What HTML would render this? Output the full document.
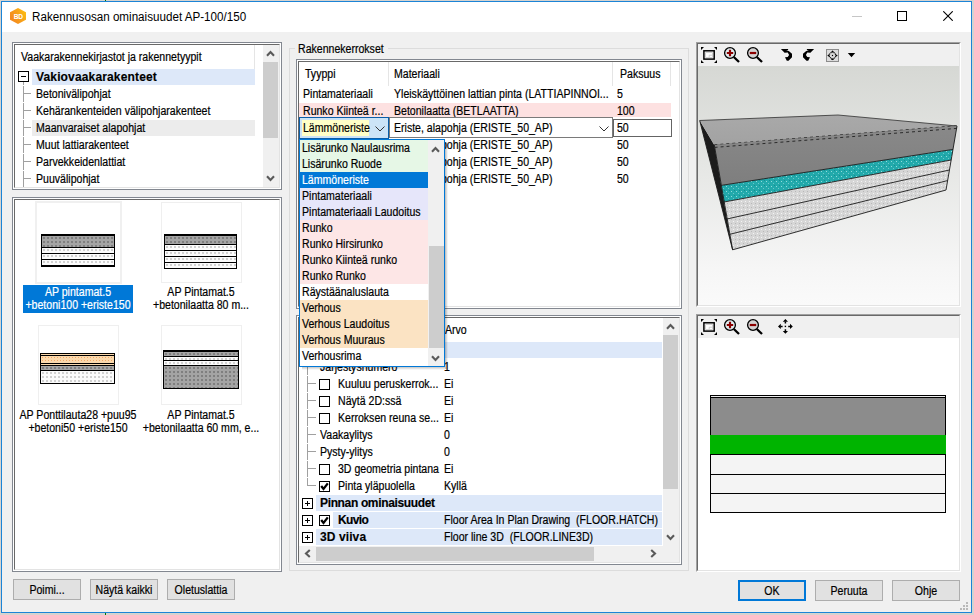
<!DOCTYPE html><html><head><meta charset="utf-8"><style>
*{margin:0;padding:0}
html,body{width:974px;height:615px;overflow:hidden;background:#d6d3cf}
body div{position:absolute}
svg{display:block}
.t{font-family:"Liberation Sans",sans-serif;font-size:12px;line-height:16px;white-space:nowrap;color:#000;transform:scaleX(0.88);transform-origin:0 0;-webkit-text-stroke:0.2px currentColor}
.tb{font-family:"Liberation Sans",sans-serif;font-size:12px;font-weight:bold;line-height:16px;letter-spacing:-0.1px;white-space:nowrap;color:#000;-webkit-text-stroke:0.15px currentColor}
.tt{font-family:"Liberation Sans",sans-serif;font-size:12px;line-height:22px;white-space:nowrap;color:#000;transform:scaleX(0.97);transform-origin:0 0}
.tc{font-family:"Liberation Sans",sans-serif;font-size:12px;line-height:13px;white-space:nowrap;text-align:center;color:#000;transform:scaleX(0.88);transform-origin:50% 0;-webkit-text-stroke:0.2px currentColor}
</style></head><body><div style="left:0;top:0;width:974px;height:615px;background:#d6d3cf"></div>
<div style="left:105px;top:0px;width:1px;height:1px;background:#007a00"></div>
<div style="left:105px;top:613px;width:1px;height:2px;background:#007a00"></div>
<div style="left:1px;top:1px;width:971px;height:612px;background:#f0f0f0;border:1px solid #1c84d6;box-sizing:border-box"></div>
<div style="left:2px;top:2px;width:969px;height:30px;background:#fff"></div>
<div style="left:9px;top:7px;width:18px;height:18px"><svg width="18" height="18" viewBox="0 0 18 18"><defs><linearGradient id="hx" x1="0" y1="0.8" x2="1" y2="0.2"><stop offset="0" stop-color="#f3841f"/><stop offset="0.55" stop-color="#f7a01a"/><stop offset="1" stop-color="#fdc010"/></linearGradient></defs><path d="M9 0.9 L17 5.3 L17 12.7 L9 17.1 L1 12.7 L1 5.3 Z" fill="url(#hx)"/><text x="9.2" y="12" font-family="Liberation Sans" font-weight="bold" font-size="6.6" fill="#fff" text-anchor="middle" letter-spacing="-0.3">BD</text></svg></div>
<div class="tt" style="left:32px;top:6px">Rakennusosan ominaisuudet AP-100/150</div>
<div style="left:852px;top:16px;width:10px;height:1px;background:#c6c6c6"></div>
<div style="left:897px;top:11px;width:10px;height:10px;border:1px solid #000;box-sizing:border-box"></div>
<div style="left:943px;top:11px;width:10px;height:10px"><svg width="10" height="10" viewBox="0 0 10 10"><path d="M0.3 0.3 L9.7 9.7 M9.7 0.3 L0.3 9.7" stroke="#000" stroke-width="1.1"/></svg></div>
<div style="left:12px;top:42px;width:270px;height:148px;border:1px solid #828790;background:#fff;box-sizing:border-box"></div>
<div style="left:14px;top:44px;width:266px;height:144px;border-top:1px solid #696969;border-left:1px solid #696969;border-right:1px solid #e3e3e3;border-bottom:1px solid #e3e3e3;background:#fff;box-sizing:border-box"></div>
<div style="left:254px;top:45px;width:1px;height:24px;background:#e5e5e5"></div>
<div class="t" style="left:21px;top:49px;">Vaakarakennekirjastot ja rakennetyypit</div>
<div style="left:32px;top:69px;width:223px;height:16px;background:#dde8f9"></div>
<div style="left:18px;top:71px;width:11px;height:11px;border:1px solid #000;background:#fff;box-sizing:border-box"></div>
<div style="left:21px;top:76px;width:5px;height:1px;background:#000"></div>
<div class="tb" style="left:36px;top:69px;letter-spacing:0.15px">Vakiovaakarakenteet</div>
<div style="left:32px;top:120px;width:223px;height:16px;background:#ececec"></div>
<div style="left:23px;top:82px;width:1px;height:105px;background:repeating-linear-gradient(#a0a0a0 0 3px,transparent 3px 4px,#a0a0a0 4px 17px)"></div>
<div style="left:24px;top:93px;width:7px;height:1px;background:#a0a0a0"></div>
<div class="t" style="left:36px;top:86px;">Betonivälipohjat</div>
<div style="left:24px;top:110px;width:7px;height:1px;background:#a0a0a0"></div>
<div class="t" style="left:36px;top:103px;">Kehärankenteiden välipohjarakenteet</div>
<div style="left:24px;top:127px;width:7px;height:1px;background:#a0a0a0"></div>
<div class="t" style="left:36px;top:120px;">Maanvaraiset alapohjat</div>
<div style="left:24px;top:144px;width:7px;height:1px;background:#a0a0a0"></div>
<div class="t" style="left:36px;top:137px;">Muut lattiarakenteet</div>
<div style="left:24px;top:161px;width:7px;height:1px;background:#a0a0a0"></div>
<div class="t" style="left:36px;top:154px;">Parvekkeidenlattiat</div>
<div style="left:24px;top:178px;width:7px;height:1px;background:#a0a0a0"></div>
<div class="t" style="left:36px;top:171px;">Puuvälipohjat</div>
<div style="left:263px;top:45px;width:16px;height:142px;background:#f0f0f0"></div>
<div style="left:263px;top:62px;width:15px;height:76px;background:#cdcdcd"></div>
<div style="left:266px;top:50px;width:9px;height:7px"><svg width="9" height="7" viewBox="0 0 9 7"><path d="M1 5.8 L4.5 2 L8 5.8" fill="none" stroke="#5a5a5a" stroke-width="2.1"/></svg></div>
<div style="left:266px;top:175px;width:9px;height:7px"><svg width="9" height="7" viewBox="0 0 9 7"><path d="M1 1.2 L4.5 5 L8 1.2" fill="none" stroke="#5a5a5a" stroke-width="2.1"/></svg></div>
<div style="left:12px;top:197px;width:270px;height:375px;border:1px solid #828790;background:#fff;box-sizing:border-box"></div>
<div style="left:14px;top:199px;width:266px;height:371px;border-top:1px solid #696969;border-left:1px solid #696969;border-right:1px solid #e3e3e3;border-bottom:1px solid #e3e3e3;background:#fff;box-sizing:border-box"></div>
<div style="left:35px;top:201px;width:87px;height:83px;border:2px solid #f0f0f0;box-sizing:border-box"></div>
<div style="left:41px;top:234px;width:74px;height:33px;background:#000"></div>
<div style="left:42px;top:236px;width:72px;height:11px;background-color:#a4a4a4;background-image:radial-gradient(circle,#6a6a6a 0.6px,transparent 0.9px);background-size:4px 4px"></div>
<div style="left:42px;top:248px;width:72px;height:5px;background-color:#fbfbfb;background-image:radial-gradient(circle,#b8b8b8 0.6px,transparent 0.9px);background-size:4px 4px"></div>
<div style="left:42px;top:254px;width:72px;height:5px;background-color:#fbfbfb;background-image:radial-gradient(circle,#b8b8b8 0.6px,transparent 0.9px);background-size:4px 4px"></div>
<div style="left:42px;top:260px;width:72px;height:5px;background-color:#fbfbfb;background-image:radial-gradient(circle,#b8b8b8 0.6px,transparent 0.9px);background-size:4px 4px"></div>
<div style="left:23px;top:285px;width:110px;height:28px;background:#0078d7"></div>
<div class="tc" style="left:-72px;top:286px;width:300px;color:#fff">AP pintamat.5<br>+betoni100 +eriste150</div>
<div style="left:161px;top:202px;width:81px;height:81px;border:1px solid #efefef;box-sizing:border-box"></div>
<div style="left:164px;top:234px;width:73px;height:35px;background:#000"></div>
<div style="left:165px;top:236px;width:71px;height:8px;background-color:#a4a4a4;background-image:radial-gradient(circle,#6a6a6a 0.6px,transparent 0.9px);background-size:4px 4px"></div>
<div style="left:165px;top:245px;width:71px;height:5px;background-color:#fbfbfb;background-image:radial-gradient(circle,#b8b8b8 0.6px,transparent 0.9px);background-size:4px 4px"></div>
<div style="left:165px;top:251px;width:71px;height:5px;background-color:#fbfbfb;background-image:radial-gradient(circle,#b8b8b8 0.6px,transparent 0.9px);background-size:4px 4px"></div>
<div style="left:165px;top:257px;width:71px;height:5px;background-color:#fbfbfb;background-image:radial-gradient(circle,#b8b8b8 0.6px,transparent 0.9px);background-size:4px 4px"></div>
<div style="left:165px;top:263px;width:71px;height:5px;background-color:#fbfbfb;background-image:radial-gradient(circle,#b8b8b8 0.6px,transparent 0.9px);background-size:4px 4px"></div>
<div class="tc" style="left:51px;top:286px;width:300px;">AP Pintamat.5<br>+betonilaatta 80 m...</div>
<div style="left:38px;top:325px;width:81px;height:80px;border:1px solid #efefef;box-sizing:border-box"></div>
<div style="left:40px;top:353px;width:75px;height:31px;background:#000"></div>
<div style="left:41px;top:354px;width:73px;height:1px;background-color:#fbd9ac;background-image:radial-gradient(circle,#f2a868 0.7px,transparent 1px);background-size:3px 3px"></div>
<div style="left:41px;top:356px;width:73px;height:7px;background-color:#fbd9ac;background-image:radial-gradient(circle,#f2a868 0.7px,transparent 1px);background-size:3px 3px"></div>
<div style="left:41px;top:364px;width:73px;height:1px;background-color:#fbd9ac;background-image:radial-gradient(circle,#f2a868 0.7px,transparent 1px);background-size:3px 3px"></div>
<div style="left:41px;top:366px;width:73px;height:4px;background-color:#a4a4a4;background-image:radial-gradient(circle,#6a6a6a 0.6px,transparent 0.9px);background-size:4px 4px"></div>
<div style="left:41px;top:371px;width:73px;height:12px;background-color:#fbfbfb;background-image:radial-gradient(circle,#b8b8b8 0.6px,transparent 0.9px);background-size:4px 4px"></div>
<div class="tc" style="left:-72px;top:409px;width:300px;">AP Ponttilauta28 +puu95<br>+betoni50 +eriste150</div>
<div style="left:161px;top:325px;width:81px;height:80px;border:1px solid #efefef;box-sizing:border-box"></div>
<div style="left:163px;top:350px;width:76px;height:39px;background:#000"></div>
<div style="left:164px;top:352px;width:74px;height:4px;background-color:#a4a4a4;background-image:radial-gradient(circle,#6a6a6a 0.6px,transparent 0.9px);background-size:4px 4px"></div>
<div style="left:164px;top:357px;width:74px;height:3px;background-color:#fbfbfb;background-image:radial-gradient(circle,#b8b8b8 0.6px,transparent 0.9px);background-size:4px 4px"></div>
<div style="left:164px;top:361px;width:74px;height:4px;background-color:#fbfbfb;background-image:radial-gradient(circle,#b8b8b8 0.6px,transparent 0.9px);background-size:4px 4px"></div>
<div style="left:164px;top:366px;width:74px;height:22px;background-color:#a4a4a4;background-image:radial-gradient(circle,#6a6a6a 0.6px,transparent 0.9px);background-size:4px 4px"></div>
<div class="tc" style="left:51px;top:409px;width:300px;">AP Pintamat.5<br>+betonilaatta 60 mm, e...</div>
<div style="left:13px;top:579px;width:68px;height:21px;border:1px solid #adadad;background:#e1e1e1;box-sizing:border-box"></div>
<div class="tc" style="left:-103.0px;top:584px;width:300px;">Poimi...</div>
<div style="left:90px;top:579px;width:68px;height:21px;border:1px solid #adadad;background:#e1e1e1;box-sizing:border-box"></div>
<div class="tc" style="left:-26.0px;top:584px;width:300px;">Näytä kaikki</div>
<div style="left:167px;top:579px;width:68px;height:21px;border:1px solid #adadad;background:#e1e1e1;box-sizing:border-box"></div>
<div class="tc" style="left:51.0px;top:584px;width:300px;">Oletuslattia</div>
<div style="left:738px;top:580px;width:68px;height:21px;border:2px solid #0078d7;background:#e1e1e1;box-sizing:border-box"></div>
<div class="tc" style="left:622.0px;top:585px;width:300px;">OK</div>
<div style="left:815px;top:580px;width:68px;height:21px;border:1px solid #adadad;background:#e1e1e1;box-sizing:border-box"></div>
<div class="tc" style="left:699.0px;top:585px;width:300px;">Peruuta</div>
<div style="left:892px;top:580px;width:68px;height:21px;border:1px solid #adadad;background:#e1e1e1;box-sizing:border-box"></div>
<div class="tc" style="left:776.0px;top:585px;width:300px;">Ohje</div>
<div style="left:289px;top:48px;width:400px;height:523px;border:1px solid #dcdcdc;box-sizing:border-box"></div>
<div style="left:295px;top:40px;width:93px;height:16px;background:#f0f0f0"></div>
<div class="t" style="left:298px;top:41px;">Rakennekerrokset</div>
<div style="left:296px;top:59px;width:386px;height:250px;border:1px solid #828790;background:#fff;box-sizing:border-box"></div>
<div style="left:298px;top:61px;width:382px;height:246px;border-top:1px solid #696969;border-left:1px solid #696969;border-right:1px solid #e3e3e3;border-bottom:1px solid #e3e3e3;background:#fff;box-sizing:border-box"></div>
<div style="left:388px;top:62px;width:1px;height:24px;background:#e5e5e5"></div>
<div style="left:612px;top:62px;width:1px;height:24px;background:#e5e5e5"></div>
<div style="left:670px;top:62px;width:1px;height:24px;background:#e5e5e5"></div>
<div class="t" style="left:305px;top:66px;">Tyyppi</div>
<div class="t" style="left:394px;top:66px;">Materiaali</div>
<div class="t" style="left:620px;top:66px;">Paksuus</div>
<div class="t" style="left:303px;top:86px;">Pintamateriaali</div>
<div class="t" style="left:394px;top:86px;">Yleiskäyttöinen lattian pinta (LATTIAPINNOI...</div>
<div class="t" style="left:617px;top:86px;">5</div>
<div style="left:299px;top:103px;width:372px;height:14px;background:#fde1e1"></div>
<div class="t" style="left:303px;top:103px;">Runko Kiinteä r...</div>
<div class="t" style="left:394px;top:103px;">Betonilaatta (BETLAATTA)</div>
<div class="t" style="left:617px;top:103px;">100</div>
<div style="left:299px;top:117px;width:90px;height:22px;border:1px solid #0b5ea8;background:#cce4f7;box-sizing:border-box"></div>
<div style="left:302px;top:120px;width:67px;height:16px;background:#ffffc8"></div>
<div class="t" style="left:303px;top:120px;">Lämmöneriste</div>
<div style="left:375px;top:126px;width:10px;height:6px"><svg width="10" height="6" viewBox="0 0 10 6"><path d="M0.5 0.5 L5 5 L9.5 0.5" fill="none" stroke="#333" stroke-width="1"/></svg></div>
<div style="left:389px;top:117px;width:224px;height:21px;border:1px solid #7a7a7a;background:#fff;box-sizing:border-box"></div>
<div class="t" style="left:394px;top:120px;">Eriste, alapohja (ERISTE_50_AP)</div>
<div style="left:599px;top:126px;width:10px;height:6px"><svg width="10" height="6" viewBox="0 0 10 6"><path d="M0.5 0.5 L5 5 L9.5 0.5" fill="none" stroke="#333" stroke-width="1"/></svg></div>
<div style="left:613px;top:119px;width:59px;height:18px;border:1px solid #646464;background:#fff;box-sizing:border-box"></div>
<div class="t" style="left:617px;top:120px;">50</div>
<div class="t" style="left:394px;top:137px;">Eriste, alapohja (ERISTE_50_AP)</div>
<div class="t" style="left:617px;top:137px;">50</div>
<div class="t" style="left:394px;top:154px;">Eriste, alapohja (ERISTE_50_AP)</div>
<div class="t" style="left:617px;top:154px;">50</div>
<div class="t" style="left:394px;top:171px;">Eriste, alapohja (ERISTE_50_AP)</div>
<div class="t" style="left:617px;top:171px;">50</div>
<div style="left:296px;top:315px;width:386px;height:250px;border:1px solid #828790;background:#fff;box-sizing:border-box"></div>
<div style="left:298px;top:317px;width:382px;height:246px;border-top:1px solid #696969;border-left:1px solid #696969;border-right:1px solid #e3e3e3;border-bottom:1px solid #e3e3e3;background:#fff;box-sizing:border-box"></div>
<div class="t" style="left:445px;top:322px;">Arvo</div>
<div style="left:299px;top:342px;width:363px;height:16px;background:#dde8f9"></div>
<div style="left:307px;top:358px;width:1px;height:128px;background:repeating-linear-gradient(#a0a0a0 0 16px,transparent 16px 17px);background-position:0 1px"></div>
<div style="left:308px;top:366px;width:8px;height:1px;background:#a0a0a0"></div>
<div class="t" style="left:320px;top:359px;">Järjestysnumero</div>
<div class="t" style="left:444px;top:359px;">1</div>
<div style="left:308px;top:383px;width:8px;height:1px;background:#a0a0a0"></div>
<div style="left:319px;top:379px;width:11px;height:11px;border:1px solid #000;background:#fff;box-sizing:border-box"></div>
<div class="t" style="left:338px;top:376px;">Kuuluu peruskerrok...</div>
<div class="t" style="left:444px;top:376px;">Ei</div>
<div style="left:308px;top:400px;width:8px;height:1px;background:#a0a0a0"></div>
<div style="left:319px;top:396px;width:11px;height:11px;border:1px solid #000;background:#fff;box-sizing:border-box"></div>
<div class="t" style="left:338px;top:393px;">Näytä 2D:ssä</div>
<div class="t" style="left:444px;top:393px;">Ei</div>
<div style="left:308px;top:417px;width:8px;height:1px;background:#a0a0a0"></div>
<div style="left:319px;top:413px;width:11px;height:11px;border:1px solid #000;background:#fff;box-sizing:border-box"></div>
<div class="t" style="left:338px;top:410px;">Kerroksen reuna se...</div>
<div class="t" style="left:444px;top:410px;">Ei</div>
<div style="left:308px;top:434px;width:8px;height:1px;background:#a0a0a0"></div>
<div class="t" style="left:320px;top:427px;">Vaakaylitys</div>
<div class="t" style="left:444px;top:427px;">0</div>
<div style="left:308px;top:451px;width:8px;height:1px;background:#a0a0a0"></div>
<div class="t" style="left:320px;top:444px;">Pysty-ylitys</div>
<div class="t" style="left:444px;top:444px;">0</div>
<div style="left:308px;top:468px;width:8px;height:1px;background:#a0a0a0"></div>
<div style="left:319px;top:464px;width:11px;height:11px;border:1px solid #000;background:#fff;box-sizing:border-box"></div>
<div class="t" style="left:338px;top:461px;">3D geometria pintana</div>
<div class="t" style="left:444px;top:461px;">Ei</div>
<div style="left:308px;top:485px;width:8px;height:1px;background:#a0a0a0"></div>
<div style="left:319px;top:481px;width:11px;height:11px;border:1px solid #000;background:#fff;box-sizing:border-box"></div>
<div style="left:319px;top:481px;width:11px;height:11px"><svg width="11" height="11" viewBox="0 0 11 11"><path d="M2.2 5 L4.5 7.9 L8.8 2.4" fill="none" stroke="#000" stroke-width="2.3"/></svg></div>
<div class="t" style="left:338px;top:478px;">Pinta yläpuolella</div>
<div class="t" style="left:444px;top:478px;">Kyllä</div>
<div style="left:316px;top:495px;width:346px;height:16px;background:#dde8f9"></div>
<div style="left:302px;top:498px;width:11px;height:11px;border:1px solid #000;background:#fff;box-sizing:border-box"></div>
<div style="left:305px;top:503px;width:5px;height:1px;background:#000"></div>
<div style="left:307px;top:501px;width:1px;height:5px;background:#000"></div>
<div class="tb" style="left:320px;top:495px;letter-spacing:-0.35px">Pinnan ominaisuudet</div>
<div style="left:333px;top:512px;width:329px;height:16px;background:#dde8f9"></div>
<div style="left:302px;top:515px;width:11px;height:11px;border:1px solid #000;background:#fff;box-sizing:border-box"></div>
<div style="left:305px;top:520px;width:5px;height:1px;background:#000"></div>
<div style="left:307px;top:518px;width:1px;height:5px;background:#000"></div>
<div style="left:319px;top:515px;width:11px;height:11px;border:1px solid #000;background:#fff;box-sizing:border-box"></div>
<div style="left:319px;top:515px;width:11px;height:11px"><svg width="11" height="11" viewBox="0 0 11 11"><path d="M2.2 5 L4.5 7.9 L8.8 2.4" fill="none" stroke="#000" stroke-width="2.3"/></svg></div>
<div class="tb" style="left:338px;top:512px;letter-spacing:-0.6px">Kuvio</div>
<div class="t" style="left:444px;top:512px;">Floor Area In Plan Drawing&nbsp; (FLOOR.HATCH)</div>
<div style="left:316px;top:529px;width:346px;height:16px;background:#dde8f9"></div>
<div style="left:302px;top:532px;width:11px;height:11px;border:1px solid #000;background:#fff;box-sizing:border-box"></div>
<div style="left:305px;top:537px;width:5px;height:1px;background:#000"></div>
<div style="left:307px;top:535px;width:1px;height:5px;background:#000"></div>
<div class="tb" style="left:320px;top:529px;letter-spacing:0.1px">3D viiva</div>
<div class="t" style="left:444px;top:529px;">Floor line 3D&nbsp; (FLOOR.LINE3D)</div>
<div style="left:663px;top:318px;width:16px;height:228px;background:#f0f0f0"></div>
<div style="left:663px;top:335px;width:15px;height:154px;background:#cdcdcd"></div>
<div style="left:666px;top:323px;width:9px;height:7px"><svg width="9" height="7" viewBox="0 0 9 7"><path d="M1 5.8 L4.5 2 L8 5.8" fill="none" stroke="#5a5a5a" stroke-width="2.1"/></svg></div>
<div style="left:666px;top:534px;width:9px;height:7px"><svg width="9" height="7" viewBox="0 0 9 7"><path d="M1 1.2 L4.5 5 L8 1.2" fill="none" stroke="#5a5a5a" stroke-width="2.1"/></svg></div>
<div style="left:299px;top:546px;width:380px;height:16px;background:#f0f0f0"></div>
<div style="left:316px;top:547px;width:278px;height:14px;background:#cdcdcd"></div>
<div style="left:304px;top:549px;width:7px;height:9px"><svg width="7" height="9" viewBox="0 0 7 9"><path d="M5.8 1 L2 4.5 L5.8 8" fill="none" stroke="#5a5a5a" stroke-width="2.1"/></svg></div>
<div style="left:650px;top:549px;width:7px;height:9px"><svg width="7" height="9" viewBox="0 0 7 9"><path d="M1.2 1 L5 4.5 L1.2 8" fill="none" stroke="#5a5a5a" stroke-width="2.1"/></svg></div>
<div style="left:445px;top:142px;width:3px;height:227px;background:linear-gradient(90deg,rgba(0,0,0,.28),rgba(0,0,0,0))"></div>
<div style="left:302px;top:367px;width:143px;height:3px;background:linear-gradient(rgba(0,0,0,.22),rgba(0,0,0,0))"></div>
<div style="left:299px;top:139px;width:146px;height:228px;border:1px solid #0078d7;background:#fff;box-sizing:border-box"></div>
<div style="left:300px;top:140px;width:128px;height:16px;background:#e6f7e6"></div>
<div class="t" style="left:302px;top:140px;color:#000">Lisärunko Naulausrima</div>
<div style="left:300px;top:156px;width:128px;height:16px;background:#e6f7e6"></div>
<div class="t" style="left:302px;top:156px;color:#000">Lisärunko Ruode</div>
<div style="left:300px;top:172px;width:128px;height:16px;background:#0078d7"></div>
<div class="t" style="left:302px;top:172px;color:#fff">Lämmöneriste</div>
<div style="left:300px;top:188px;width:128px;height:16px;background:#e6e6fa"></div>
<div class="t" style="left:302px;top:188px;color:#000">Pintamateriaali</div>
<div style="left:300px;top:204px;width:128px;height:16px;background:#e6e6fa"></div>
<div class="t" style="left:302px;top:204px;color:#000">Pintamateriaali Laudoitus</div>
<div style="left:300px;top:220px;width:128px;height:16px;background:#fde6e6"></div>
<div class="t" style="left:302px;top:220px;color:#000">Runko</div>
<div style="left:300px;top:236px;width:128px;height:16px;background:#fde6e6"></div>
<div class="t" style="left:302px;top:236px;color:#000">Runko Hirsirunko</div>
<div style="left:300px;top:252px;width:128px;height:16px;background:#fde6e6"></div>
<div class="t" style="left:302px;top:252px;color:#000">Runko Kiinteä runko</div>
<div style="left:300px;top:268px;width:128px;height:16px;background:#fde6e6"></div>
<div class="t" style="left:302px;top:268px;color:#000">Runko Runko</div>
<div style="left:300px;top:284px;width:128px;height:16px;background:#fff"></div>
<div class="t" style="left:302px;top:284px;color:#000">Räystäänaluslauta</div>
<div style="left:300px;top:300px;width:128px;height:16px;background:#fbe3c3"></div>
<div class="t" style="left:302px;top:300px;color:#000">Verhous</div>
<div style="left:300px;top:316px;width:128px;height:16px;background:#fbe3c3"></div>
<div class="t" style="left:302px;top:316px;color:#000">Verhous Laudoitus</div>
<div style="left:300px;top:332px;width:128px;height:16px;background:#fbe3c3"></div>
<div class="t" style="left:302px;top:332px;color:#000">Verhous Muuraus</div>
<div style="left:300px;top:348px;width:128px;height:16px;background:#fff"></div>
<div class="t" style="left:302px;top:348px;color:#000">Verhousrima</div>
<div style="left:428px;top:140px;width:16px;height:226px;background:#f0f0f0"></div>
<div style="left:429px;top:246px;width:15px;height:102px;background:#cdcdcd"></div>
<div style="left:431px;top:146px;width:9px;height:7px"><svg width="9" height="7" viewBox="0 0 9 7"><path d="M1 5.8 L4.5 2 L8 5.8" fill="none" stroke="#5a5a5a" stroke-width="2.1"/></svg></div>
<div style="left:431px;top:355px;width:9px;height:7px"><svg width="9" height="7" viewBox="0 0 9 7"><path d="M1 1.2 L4.5 5 L8 1.2" fill="none" stroke="#5a5a5a" stroke-width="2.1"/></svg></div>
<div style="left:696px;top:42px;width:265px;height:265px;border-top:1px solid #a0a0a0;border-left:1px solid #a0a0a0;border-right:1px solid #fff;border-bottom:1px solid #fff;box-sizing:border-box"></div>
<div style="left:697px;top:43px;width:263px;height:263px;border-top:1px solid #696969;border-left:1px solid #696969;border-right:1px solid #e3e3e3;border-bottom:1px solid #e3e3e3;background:#f0f0f0;box-sizing:border-box"></div>
<div style="left:698px;top:66px;width:261px;height:239px;background:linear-gradient(#d6d8d4,#f6f6f6 85%,#fafafa)"></div>
<div style="left:696px;top:314px;width:265px;height:258px;border-top:1px solid #a0a0a0;border-left:1px solid #a0a0a0;border-right:1px solid #fff;border-bottom:1px solid #fff;box-sizing:border-box"></div>
<div style="left:697px;top:315px;width:263px;height:256px;border-top:1px solid #696969;border-left:1px solid #696969;border-right:1px solid #e3e3e3;border-bottom:1px solid #e3e3e3;background:#fff;box-sizing:border-box"></div>
<div style="left:698px;top:316px;width:261px;height:22px;background:#f0f0f0"></div>
<div style="left:698px;top:44px;width:261px;height:22px"><svg width="261" height="22" viewBox="698 44 261 22"><g transform="translate(701,47)"><path d="M0 0 H3 L0 3 Z M16 0 H13 L16 3 Z M0 16 H3 L0 13 Z M16 16 H13 L16 13 Z" fill="#000"/><rect x="2.9" y="3.8" width="10.3" height="8.3" fill="#fff" stroke="#000" stroke-width="1.5"/><path d="M4.5 5.5 H11.5 M4.5 5.5 V10.5 M11.5 8.2 H8.2 V10.5 M4.5 10.5 H11.5 M11.5 5.5 V10.5" fill="none" stroke="#c8c8c8" stroke-width="0.8"/></g><circle cx="730" cy="53" r="5.4" fill="#e2eef0" stroke="#000" stroke-width="1.3"/><path d="M726.8 53 H733.2 M730 49.8 V56.2" stroke="#8b0000" stroke-width="2.2"/><path d="M733.8 57 L739 62" stroke="#000" stroke-width="2.3"/><circle cx="753" cy="53" r="5.4" fill="#d4d4d4" stroke="#000" stroke-width="1.3"/><path d="M749.8 53 H756.2" stroke="#8b0000" stroke-width="2.2"/><path d="M756.8 57 L762 62" stroke="#000" stroke-width="2.3"/><g transform="translate(778,45)"><polygon points="2.9,3.9 10.1,3.9 10.1,4.9 8.2,5.1 11.1,6.2 14,8.8 14,12.3 10.5,15.8 8.8,15.8 7,12.3 9.7,12.1 11.1,10.1 9.7,7.6 6.6,7.8" fill="#000"/><polygon points="36.1,3.9 28.9,3.9 28.9,4.9 30.8,5.1 27.9,6.2 25.0,8.8 25.0,12.3 28.5,15.8 30.2,15.8 32.0,12.3 29.3,12.1 27.9,10.1 29.3,7.6 32.4,7.8" fill="#000"/></g><rect x="826.5" y="49.5" width="12" height="12" fill="#dcdcdc" stroke="#8c8c8c" stroke-width="1"/><g transform="translate(832.5,55.5)"><path d="M0 -4.3 L4.3 0 L0 4.3 L-4.3 0 Z" fill="none" stroke="#000" stroke-width="1.1" stroke-dasharray="1.1 0.7"/><path d="M0 -4.8 L1.6 -3 H-1.6 Z M0 4.8 L1.6 3 H-1.6 Z M-4.8 0 L-3 1.6 V-1.6 Z M4.8 0 L3 1.6 V-1.6 Z" fill="#000"/><rect x="-0.6" y="-0.6" width="1.2" height="1.2" fill="#000"/></g><path d="M847.8 53 H855.2 L851.5 57.2 Z" fill="#000"/></svg></div>
<div style="left:698px;top:316px;width:261px;height:22px"><svg width="261" height="22" viewBox="698 316 261 22"><g transform="translate(701,319)"><path d="M0 0 H3 L0 3 Z M16 0 H13 L16 3 Z M0 16 H3 L0 13 Z M16 16 H13 L16 13 Z" fill="#000"/><rect x="2.9" y="3.8" width="10.3" height="8.3" fill="#fff" stroke="#000" stroke-width="1.5"/><path d="M4.5 5.5 H11.5 M4.5 5.5 V10.5 M11.5 8.2 H8.2 V10.5 M4.5 10.5 H11.5 M11.5 5.5 V10.5" fill="none" stroke="#c8c8c8" stroke-width="0.8"/></g><circle cx="730" cy="325" r="5.4" fill="#e2eef0" stroke="#000" stroke-width="1.3"/><path d="M726.8 325 H733.2 M730 321.8 V328.2" stroke="#8b0000" stroke-width="2.2"/><path d="M733.8 329 L739 334" stroke="#000" stroke-width="2.3"/><circle cx="753" cy="325" r="5.4" fill="#d4d4d4" stroke="#000" stroke-width="1.3"/><path d="M749.8 325 H756.2" stroke="#8b0000" stroke-width="2.2"/><path d="M756.8 329 L762 334" stroke="#000" stroke-width="2.3"/><g transform="translate(785.4,326.4)"><path d="M0 -7.4 L2.6 -4.6 H-2.6 Z M0 7.4 L2.6 4.6 H-2.6 Z M-7.4 0 L-4.6 2.6 V-2.6 Z M7.4 0 L4.6 2.6 V-2.6 Z" fill="#000"/><path d="M0 -5 V-2.8 M0 5 V2.8 M-5 0 H-2.8 M5 0 H2.8" stroke="#000" stroke-width="1.5"/><rect x="-0.7" y="-0.7" width="1.4" height="1.4" fill="#000"/></g></svg></div>
<div style="left:698px;top:66px;width:261px;height:239px"><svg width="261" height="239" viewBox="698 66 261 239"><defs><linearGradient id="topf" x1="0" y1="0" x2="0" y2="1"><stop offset="0" stop-color="#a9a9a9"/><stop offset="1" stop-color="#a2a2a2"/></linearGradient><linearGradient id="frontg" x1="0" y1="0" x2="0" y2="1"><stop offset="0" stop-color="#898989"/><stop offset="1" stop-color="#7e7e7e"/></linearGradient><pattern id="noiseT" width="5" height="5" patternUnits="userSpaceOnUse"><rect width="5" height="5" fill="#22a9ab"/><rect x="1" y="1" width="1" height="1" fill="#8fdcdc"/><rect x="3" y="3" width="1" height="1" fill="#6cc8c9"/><rect x="4" y="0" width="1" height="1" fill="#138f91"/></pattern><pattern id="noiseW" width="4" height="4" patternUnits="userSpaceOnUse"><rect width="4" height="4" fill="#d6d6d6"/><rect x="1" y="1" width="1" height="1" fill="#f4f4f4"/><rect x="3" y="3" width="1" height="1" fill="#b8b8b8"/></pattern></defs><polygon points="699.7,120.5 714.3,145 732.6,249.8" fill="#1c1c1c"/><polygon points="699.7,120.5 838,115 957,126 714.3,145" fill="url(#topf)"/><path d="M699.7,120.5 L838,115 L957,126" stroke="#303030" stroke-width="0.8" fill="none"/><line x1="714.3" y1="146.1" x2="957" y2="127.1" stroke="#5e5e5e" stroke-width="2.6"/><line x1="714.3" y1="144.8" x2="957" y2="125.8" stroke="#2a2a2a" stroke-width="1" stroke-dasharray="3 3"/><polygon points="714.3,145 957,126 953,149.4 721.2,185.4" fill="url(#frontg)"/><line x1="714.6" y1="147.4" x2="956.6" y2="128.4" stroke="#2a2a2a" stroke-width="1" stroke-dasharray="3 3"/><polygon points="721.2,185.4 953,149.4 951.2,160 724,202" fill="url(#noiseT)"/><polygon points="724,202 951.2,160 946,190 732.6,249.8" fill="url(#noiseW)"/><path d="M721.2,185.4 L953,149.4 M724,202 L951.2,160 M726.8,219 L949.4,170 M729.4,234.4 L947.6,180.6 M732.6,249.8 L946,190" stroke="#1a1a1a" stroke-width="0.9" fill="none"/><path d="M957,126 L946,190 M714.3,145 L732.6,249.8 M699.7,120.5 L732.6,249.8" stroke="#1a1a1a" stroke-width="0.9" fill="none"/></svg></div>
<div style="left:710px;top:395px;width:236px;height:118px;background:#000"></div>
<div style="left:711px;top:396px;width:234px;height:1px;background:#eee"></div>
<div style="left:711px;top:398px;width:234px;height:37px;background:#8c8c8c"></div>
<div style="left:710px;top:435px;width:236px;height:19px;background:#00b400"></div>
<div style="left:711px;top:455px;width:234px;height:19px;background:#f4f4f4"></div>
<div style="left:711px;top:475px;width:234px;height:18px;background:#f4f4f4"></div>
<div style="left:711px;top:494px;width:234px;height:18px;background:#f4f4f4"></div>
<div style="left:966px;top:602px;width:2px;height:2px;background:#b8b8b8"></div>
<div style="left:963px;top:605px;width:2px;height:2px;background:#b8b8b8"></div>
<div style="left:966px;top:605px;width:2px;height:2px;background:#b8b8b8"></div>
<div style="left:960px;top:608px;width:2px;height:2px;background:#b8b8b8"></div>
<div style="left:963px;top:608px;width:2px;height:2px;background:#b8b8b8"></div>
<div style="left:966px;top:608px;width:2px;height:2px;background:#b8b8b8"></div></body></html>
